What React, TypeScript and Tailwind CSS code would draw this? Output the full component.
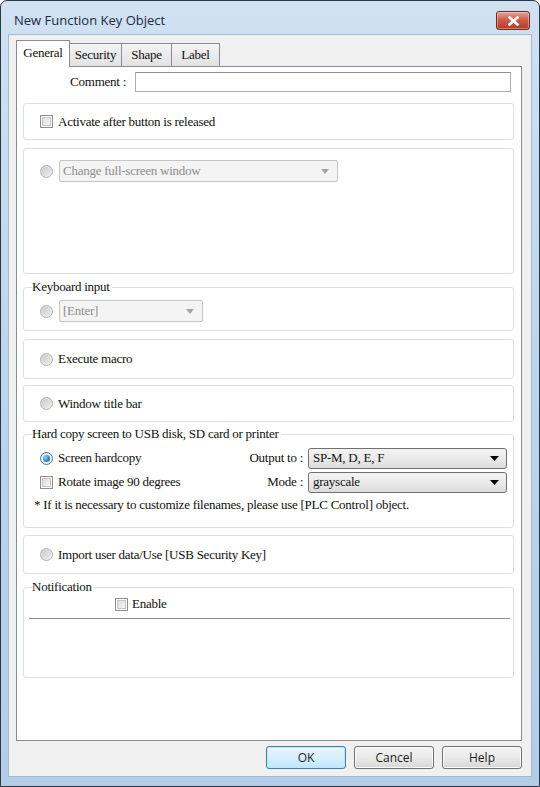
import React from "react";

const face = "font-['Liberation_Serif','Times_New_Roman',serif] text-[13px] tracking-[-0.25px]";
const serif = `${face} text-[#101010]`;

function Checkbox() {
  return (
    <span className="inline-block h-[13px] w-[13px] shrink-0 border border-[#8e8f8f] bg-white p-px">
      <span className="block h-full w-full border border-[#c6c6c6] bg-gradient-to-br from-[#dcdcdc] to-[#f7f7f7]" />
    </span>
  );
}

function Radio({ checked = false, disabled = false }: { checked?: boolean; disabled?: boolean }) {
  return (
    <span
      className={`flex h-[13px] w-[13px] shrink-0 items-center justify-center rounded-full border ${
        disabled ? "border-[#b0b0b0] bg-gradient-to-br from-[#d6d6d6] to-[#f4f4f4]" : "border-[#3d7bad] bg-gradient-to-br from-[#e3ecf4] to-[#ffffff]"
      }`}
    >
      {checked && (
        <span className="block h-[7px] w-[7px] rounded-full bg-[radial-gradient(circle_at_35%_35%,#8fd0ff,#1d6fb8_70%)]" />
      )}
      {!checked && disabled && <span className="block h-[9px] w-[9px] rounded-full bg-gradient-to-br from-[#cbcbcb] to-[#ececec]" />}
    </span>
  );
}

function DisabledCombo({ text, width }: { text: string; width: string }) {
  return (
    <div className={`flex h-[22px] items-center rounded-[2px] border border-[#c5c5c5] bg-[#f4f4f4] pl-[3px] pr-[8px] ${width}`}>
      <span className={`${face} flex-1 text-[#8d8d8d]`}>{text}</span>
      <svg width="8" height="5" viewBox="0 0 8 5">
        <path d="M0 0H8L4 5Z" fill="#a3a3a3" />
      </svg>
    </div>
  );
}

function Combo({ text }: { text: string }) {
  return (
    <div className="flex h-[21px] w-[199px] items-center rounded-[3px] border border-[#707070] bg-gradient-to-b from-[#f3f3f3] via-[#ebebeb] to-[#dcdcdc] pl-[4px] pr-[7px]">
      <span className={`${serif} flex-1`}>{text}</span>
      <svg width="9" height="5" viewBox="0 0 9 5">
        <path d="M0 0H9L4.5 5Z" fill="#000" />
      </svg>
    </div>
  );
}

function Group({
  title,
  className,
  children,
}: {
  title?: string;
  className: string;
  children?: React.ReactNode;
}) {
  return (
    <div className={`relative shrink-0 rounded-[3px] border border-[#dcdfe3] ${className}`}>
      {title && (
        <span className={`${serif} absolute left-[8px] top-[-9px] bg-white pr-[2px] leading-[16px]`}>{title}</span>
      )}
      {children}
    </div>
  );
}

function Tab({ label, active, width }: { label: string; active?: boolean; width: string }) {
  return (
    <div
      className={`flex items-center justify-center border border-[#898c95] ${width} ${
        active
          ? "relative z-10 -mb-px h-[27px] border-b-0 bg-white pb-[3px]"
          : "-ml-px h-[23px] border-b-0 bg-gradient-to-b from-[#f4f4f4] to-[#e2e2e2] first:ml-0"
      }`}
    >
      <span className={serif}>{label}</span>
    </div>
  );
}

function DialogButton({ label, primary }: { label: string; primary?: boolean }) {
  return (
    <button
      className={`flex h-[23px] w-[80px] items-center justify-center rounded-[3px] border font-['Open_Sans',sans-serif] text-[12px] text-[#1b1b1b] ${
        primary
          ? "border-[#3c7fb1] bg-gradient-to-b from-[#eaf6fd] via-[#d9f0fc] to-[#bee6fd] shadow-[inset_0_0_0_1px_#c4e5f6]"
          : "border-[#707070] bg-gradient-to-b from-[#f2f2f2] via-[#ebebeb] to-[#d6d6d6] shadow-[inset_0_0_0_1px_#fcfcfc]"
      }`}
    >
      {label}
    </button>
  );
}

export default function App() {
  return (
    <div className="h-[787px] w-[540px] bg-white">
      <div className="flex h-full w-full flex-col rounded-t-[7px] border border-[#283847] bg-gradient-to-b from-[#d0e1f3] via-[#bcd4ec] to-[#b3cde9] px-[7px] pb-[9px]">
        {/* title bar */}
        <div className="flex h-[33px] shrink-0 items-start justify-between">
          <span className="mt-[10px] ml-[6px] font-['Open_Sans',sans-serif] text-[13px] leading-[18px] text-[#1c2a3c]">
            New Function Key Object
          </span>
          <div className="mt-[10px] mr-[2px] flex h-[19px] w-[34px] items-center justify-center rounded-[3px] border border-[#6b2a22] bg-gradient-to-b from-[#e5a394] via-[#cb5a45] to-[#b63a24] shadow-[inset_0_0_0_1px_rgba(255,255,255,0.35)]">
            <svg width="11" height="10" viewBox="0 0 11 10">
              <path d="M1.5 1.5L9.5 8.5M9.5 1.5L1.5 8.5" stroke="#ffffff" strokeWidth="2.6" strokeLinecap="square" />
            </svg>
          </div>
        </div>

        {/* client area */}
        <div className="flex flex-1 flex-col border border-[#a3b9d1] bg-[#f0f0f0] pt-[5px]">
          <div className="ml-[7px] flex h-[26px] items-end">
            <Tab label="General" active width="w-[54px]" />
            <Tab label="Security" width="w-[53px]" />
            <Tab label="Shape" width="w-[51px]" />
            <Tab label="Label" width="w-[49px]" />
          </div>

          <div className="ml-[7px] mr-[9px] flex h-[675px] flex-col border border-[#898c95] bg-white pl-[6px] pr-[7px]">
            {/* comment */}
            <div className="mt-[5px] flex h-[20px] shrink-0 items-center">
              <span className={`${serif} w-[103px] text-right`}>Comment :</span>
              <div className="ml-[9px] mr-[3px] h-[20px] flex-1 border border-[#abadb3] border-t-[#8e9194] bg-white" />
            </div>

            <Group className="mt-[11px] flex h-[37px] items-center pl-[16px]">
              <Checkbox />
              <span className={`${serif} ml-[5px]`}>Activate after button is released</span>
            </Group>

            <Group className="mt-[8px] h-[126px] pl-[16px] pt-[11px]">
              <div className="flex items-center gap-[6px]">
                <Radio disabled />
                <DisabledCombo text="Change full-screen window" width="w-[279px]" />
              </div>
            </Group>

            <Group title="Keyboard input" className="mt-[13px] h-[44px] pl-[16px] pt-[12px]">
              <div className="flex items-center gap-[6px]">
                <Radio disabled />
                <DisabledCombo text="[Enter]" width="w-[144px]" />
              </div>
            </Group>

            <Group className="mt-[8px] flex h-[40px] items-center pl-[16px]">
              <Radio disabled />
              <span className={`${serif} ml-[5px]`}>Execute macro</span>
            </Group>

            <Group className="mt-[6px] flex h-[37px] items-center pl-[16px]">
              <Radio disabled />
              <span className={`${serif} ml-[5px]`}>Window title bar</span>
            </Group>

            <Group title="Hard copy screen to USB disk, SD card or printer" className="mt-[12px] h-[94px] pr-[6px] pt-[12px]">
              <div className="flex h-[22px] items-center pl-[16px]">
                <Radio checked />
                <span className={`${serif} ml-[5px] flex-1`}>Screen hardcopy</span>
                <span className={`${serif} mr-[5px]`}>Output to :</span>
                <Combo text="SP-M, D, E, F" />
              </div>
              <div className="mt-[2px] flex h-[22px] items-center pl-[16px]">
                <Checkbox />
                <span className={`${serif} ml-[5px] flex-1`}>Rotate image 90 degrees</span>
                <span className={`${serif} mr-[5px]`}>Mode :</span>
                <Combo text="grayscale" />
              </div>
              <div className={`${serif} mt-[4px] pl-[10px] leading-[16px]`}>
                * If it is necessary to customize filenames, please use [PLC Control] object.
              </div>
            </Group>

            <Group className="mt-[7px] flex h-[39px] items-center pl-[16px]">
              <Radio disabled />
              <span className={`${serif} ml-[5px]`}>Import user data/Use [USB Security Key]</span>
            </Group>

            <Group title="Notification" className="mt-[13px] h-[91px] pt-[9px]">
              <div className="flex h-[14px] items-center pl-[91px]">
                <Checkbox />
                <span className={`${serif} ml-[4px]`}>Enable</span>
              </div>
              <div className="ml-[5px] mr-[3px] mt-[7px] h-[2px] border-t border-[#8f8f8f] border-b-white" />
            </Group>
          </div>

          {/* dialog buttons */}
          <div className="mr-[9px] mt-[5px] flex justify-end gap-[8px]">
            <DialogButton label="OK" primary />
            <DialogButton label="Cancel" />
            <DialogButton label="Help" />
          </div>
        </div>
      </div>
    </div>
  );
}
